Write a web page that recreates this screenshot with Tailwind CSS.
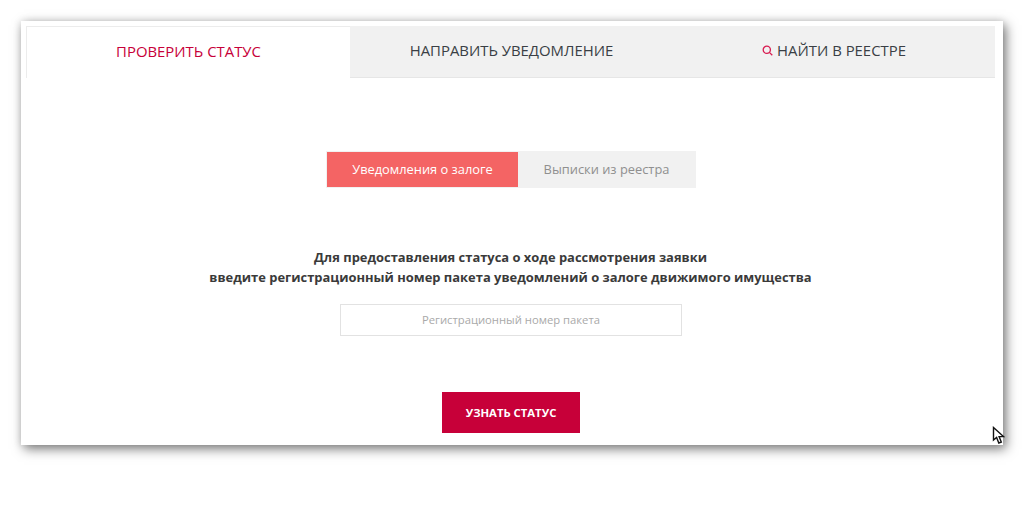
<!DOCTYPE html>
<html lang="ru">
  <head>
    <meta charset="UTF-8" />
    <title>Проверить статус</title>
    <script src="https://cdn.jsdelivr.net/npm/@tailwindcss/browser@4"></script>
  </head>
  <body class="bg-white font-['Open_Sans',sans-serif] h-[518px] pt-[21px] pl-[21px] overflow-hidden">
    <div class="relative w-[982px] h-[424px] bg-white shadow-[3px_4px_11px_rgba(0,0,0,0.5),0_0_8px_rgba(0,0,0,0.12)] pt-[5px] pl-[5px] pr-[8px]">
      <!-- Tabs -->
      <div class="flex h-[52px] bg-[#f1f1f1] border-b border-[#e6e6e6] text-[14.9px] text-[#3a3f45]">
        <div class="w-[324px] -mb-px pb-[3px] bg-white border-l border-t border-[#ececec] flex items-center justify-center text-[#c70039]">ПРОВЕРИТЬ СТАТУС</div>
        <div class="w-[323px] pb-[2px] flex items-center justify-center">НАПРАВИТЬ УВЕДОМЛЕНИЕ</div>
        <div class="flex-1 pb-[2px] flex items-center justify-center gap-[4px]">
          <svg class="w-[11px] h-[11px]" viewBox="0 0 11 11" fill="none" stroke="#d81b50" stroke-width="1.3"><circle cx="4.8" cy="4.8" r="3.6" /><path d="M7.4 7.4L10.3 10.3" /></svg>
          <span>НАЙТИ В РЕЕСТРЕ</span>
        </div>
      </div>

      <!-- Type switch -->
      <div class="mt-[73px] flex w-[370px] h-[37px] ml-[300px] bg-[#f1f1f1] p-px text-[12.85px]">
        <div class="w-[191px] bg-[#f46464] text-white flex items-center justify-center">Уведомления о залоге</div>
        <div class="flex-1 text-[#8f8f8f] flex items-center justify-center">Выписки из реестра</div>
      </div>

      <!-- Hint -->
      <p class="mt-[60px] text-center text-[12.93px] leading-[19.5px] font-bold text-[#3a3a3a]">
        Для предоставления статуса о ходе рассмотрения заявки<br />
        введите регистрационный номер пакета уведомлений о залоге движимого имущества
      </p>

      <div class="mt-[17px] ml-[314px] w-[342px] h-[32px] border border-[#e2e2e2] flex items-center justify-center text-[11.25px] text-[#a9a9a9]">Регистрационный номер пакета</div>

      <div class="mt-[56px] ml-[416px] w-[138px] h-[41px] pt-px bg-[#c70039] text-white text-[11.3px] font-bold flex items-center justify-center">УЗНАТЬ СТАТУС</div>

      <!-- Mouse pointer -->
      <svg class="absolute left-[971px] top-[405px] w-[13px] h-[19px]" viewBox="0 0 13 19"><path d="M1.5 1.5V14L4.6 11.4L6.8 17L9.3 16L7.1 10.6H11.5Z" fill="#fff" stroke="#111" stroke-width="1.4" /></svg>
    </div>
  </body>
</html>
